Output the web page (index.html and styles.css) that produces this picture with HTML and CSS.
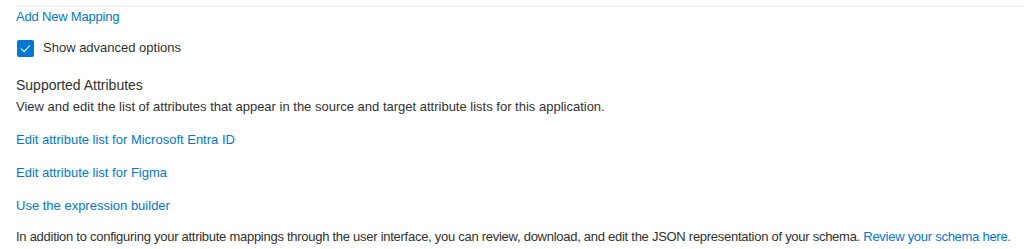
FILE: index.html
```html
<!DOCTYPE html>
<html>
<head>
<meta charset="utf-8">
<link rel="stylesheet" href="styles.css">
</head>
<body>
<div class="page">
  <div class="divider"></div>
  <a class="link add-link" href="#">Add New Mapping</a>
  <label class="check-row">
    <span class="checkbox">
      <svg width="11" height="11" viewBox="0 0 12 12"><path d="M1.5 6.5 L4.5 9.5 L10.5 3" fill="none" stroke="#fff" stroke-width="1.2" stroke-linecap="round" stroke-linejoin="round"/></svg>
    </span>
    <span class="check-label">Show advanced options</span>
  </label>
  <div class="section">
    <div class="section-title">Supported Attributes</div>
    <div class="section-desc">View and edit the list of attributes that appear in the source and target attribute lists for this application.</div>
  </div>
  <div class="links">
    <a class="link" href="#">Edit attribute list for Microsoft Entra ID</a>
    <a class="link" href="#">Edit attribute list for Figma</a>
    <a class="link" href="#">Use the expression builder</a>
  </div>
  <p class="footer-text">In addition to configuring your attribute mappings through the user interface, you can review, download, and edit the JSON representation of your schema. <a class="link" href="#">Review your schema here.</a></p>
</div>
</body>
</html>
```
FILE: styles.css
```css
html, body {
  margin: 0;
  padding: 0;
  background: #fff;
}
body {
  font-family: "Liberation Sans", Arial, sans-serif;
  font-size: 13px;
  color: #323130;
}
.page {
  padding: 5px 0 0 16px;
  display: flex;
  flex-direction: column;
  align-items: flex-start;
}
.divider {
  align-self: stretch;
  height: 2px;
  background: #f3f2f1;
}
.link {
  color: #0078d4;
  text-decoration: none;
  line-height: 18px;
}
.add-link {
  margin-top: 1px;
  letter-spacing: -0.2px;
}
.check-row {
  display: flex;
  align-items: center;
  gap: 9px;
  margin-top: 13px;
  margin-left: 1px;
}
.checkbox {
  width: 17px;
  height: 17px;
  border-radius: 2px;
  background: #0078d4;
  display: flex;
  align-items: center;
  justify-content: center;
}
.check-label {
  line-height: 18px;
}
.section {
  margin-top: 18px;
}
.section-title {
  font-size: 14px;
  line-height: 20px;
}
.section-desc {
  margin-top: 3px;
  line-height: 18px;
}
.links {
  display: flex;
  flex-direction: column;
  align-items: flex-start;
  gap: 15px;
  margin-top: 15px;
}
.footer-text {
  margin: 13px 0 0;
  line-height: 18px;
  white-space: nowrap;
  letter-spacing: -0.27px;
}
```
